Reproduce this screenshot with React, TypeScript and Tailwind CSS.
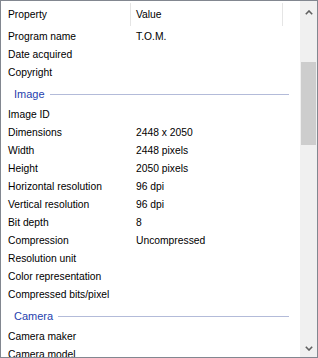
import React from "react";

type Row = { label: string; value?: string } | { group: string };

const rows: Row[] = [
    { label: "Program name", value: "T.O.M." },
    { label: "Date acquired" },
    { label: "Copyright" },
    { group: "Image" },
    { label: "Image ID" },
    { label: "Dimensions", value: "2448 x 2050" },
    { label: "Width", value: "2448 pixels" },
    { label: "Height", value: "2050 pixels" },
    { label: "Horizontal resolution", value: "96 dpi" },
    { label: "Vertical resolution", value: "96 dpi" },
    { label: "Bit depth", value: "8" },
    { label: "Compression", value: "Uncompressed" },
    { label: "Resolution unit" },
    { label: "Color representation" },
    { label: "Compressed bits/pixel" },
    { group: "Camera" },
    { label: "Camera maker" },
    { label: "Camera model" },
];

const Chevron = ({ down }: { down?: boolean }) => (
    <svg width="8" height="5" viewBox="0 0 8 5">
        <polyline
            points={down ? "0.8,0.8 4,4 7.2,0.8" : "0.8,4.2 4,1 7.2,4.2"}
            fill="none"
            stroke="#606060"
            strokeWidth="1.6"
        />
    </svg>
);

export default function App() {
    return (
        <div
            className="w-[318px] h-[358px] border border-[#828790] bg-white flex overflow-hidden text-[10.3px] text-black"
            style={{ fontFamily: '"Liberation Sans", Arial, sans-serif' }}
        >
            {/* list */}
            <div className="flex-1 flex flex-col overflow-hidden">
                <div className="h-[26px] flex shrink-0 pt-[2px]">
                    <div className="w-[129px] pl-[7px] flex items-center">Property</div>
                    <div className="w-px h-[23px] bg-[#e5e5e5]" />
                    <div className="w-[151px] pl-[5px] flex items-center">Value</div>
                    <div className="w-px h-[23px] bg-[#e5e5e5]" />
                </div>
                {rows.map((row, i) =>
                    "group" in row ? (
                        <div key={i} className="h-[24px] shrink-0 flex items-center pl-[13px] pr-[11px] pt-[2px]">
                            <span className="text-[#1f3fae] text-[11px]">{row.group}</span>
                            <div className="flex-1 h-px ml-[5px] bg-[#b3bbd9]" />
                        </div>
                    ) : (
                        <div key={i} className="h-[18px] shrink-0 flex items-center pt-[2px]">
                            <div className="w-[135px] pl-[7px] whitespace-nowrap">{row.label}</div>
                            <div className="whitespace-nowrap">{row.value}</div>
                        </div>
                    )
                )}
            </div>

            {/* scrollbar */}
            <div className="w-[17px] bg-[#f0f0f0] flex flex-col">
                <div className="h-[17px] flex justify-center pt-[9px]">
                    <Chevron />
                </div>
                <div className="flex-1">
                    <div className="mt-[44px] mx-[1px] h-[83px] bg-[#cdcdcd]" />
                </div>
                <div className="h-[17px] flex justify-center pt-[6px]">
                    <Chevron down />
                </div>
            </div>
        </div>
    );
}
